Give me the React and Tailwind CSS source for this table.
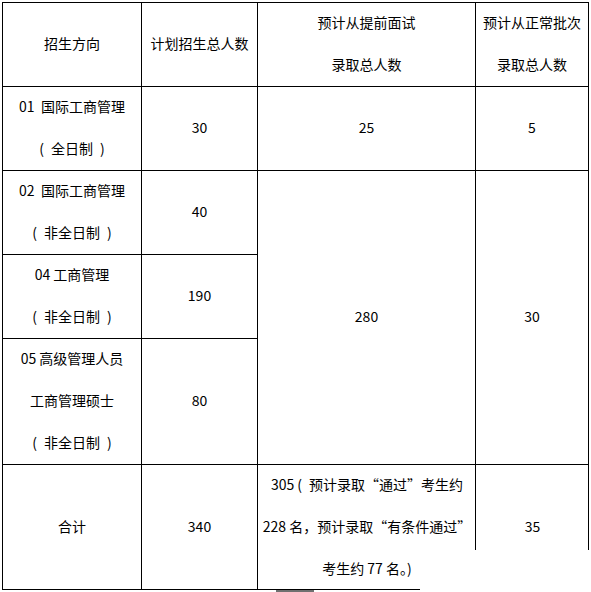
export default function App() {
  const cell = "border-r border-b border-black flex flex-col items-center justify-center pb-[3px]";
  const par = (t) => `(\u2002${t}\u2002)`;
  return (
    <div className="w-[591px] h-[592px] bg-white overflow-hidden text-[14px] leading-[42px] text-black font-['Noto_Sans_CJK_SC','Noto_Sans',sans-serif]">
      <div className="ml-[2px] mt-[2px] w-[587px]">
        <div className="grid grid-cols-[139px_116px_218px_113px] grid-rows-[84px_84px_84px_84px_126px_124px] border-l border-t border-black">
          <div className={cell}>
            <div>招生方向</div>
          </div>
          <div className={cell}>
            <div>计划招生总人数</div>
          </div>
          <div className={cell}>
            <div>预计从提前面试</div>
            <div>录取总人数</div>
          </div>
          <div className={cell}>
            <div>预计从正常批次</div>
            <div>录取总人数</div>
          </div>

          <div className={cell}>
            <div className="whitespace-pre">01  国际工商管理</div>
            <div className="whitespace-pre">{par("全日制")}</div>
          </div>
          <div className={cell}>30</div>
          <div className={cell}>25</div>
          <div className={cell}>5</div>

          <div className={cell}>
            <div className="whitespace-pre">02  国际工商管理</div>
            <div className="whitespace-pre">{par("非全日制")}</div>
          </div>
          <div className={cell}>40</div>
          <div className={`${cell} col-start-3 row-start-3 row-span-3`}>280</div>
          <div className={`${cell} col-start-4 row-start-3 row-span-3`}>30</div>

          <div className={`${cell} col-start-1 row-start-4`}>
            <div>04 工商管理</div>
            <div className="whitespace-pre">{par("非全日制")}</div>
          </div>
          <div className={`${cell} col-start-2 row-start-4`}>190</div>

          <div className={`${cell} col-start-1 row-start-5`}>
            <div>05 高级管理人员</div>
            <div>工商管理硕士</div>
            <div className="whitespace-pre">{par("非全日制")}</div>
          </div>
          <div className={`${cell} col-start-2 row-start-5`}>80</div>

          <div className="col-start-1 row-start-6 border-r border-black flex items-center justify-center pb-[3px]">合计</div>
          <div className="col-start-2 row-start-6 border-r border-black flex items-center justify-center pb-[3px]">340</div>
          <div className="col-start-3 row-start-6 flex flex-col items-center justify-center pb-[3px]">
            <div className="whitespace-pre">305{"\u2009(\u2002"}预计录取“通过”考生约</div>
            <div className="whitespace-pre">228 名，预计录取“有条件通过”</div>
            <div className="whitespace-pre">考生约 77 名。{")"}</div>
          </div>
          <div className="col-start-4 row-start-6 grid">
            <div className="[grid-area:1/1] self-start h-[85px] -ml-px w-[114px] border-l border-r border-black"></div>
            <div className="[grid-area:1/1] self-center justify-self-center pb-[3px]">35</div>
          </div>
        </div>
        <div className="h-px w-[418px] bg-black"></div>
        <div className="ml-[274px] h-[2px] w-[38px] bg-[#707070]"></div>
      </div>
    </div>
  );
}
